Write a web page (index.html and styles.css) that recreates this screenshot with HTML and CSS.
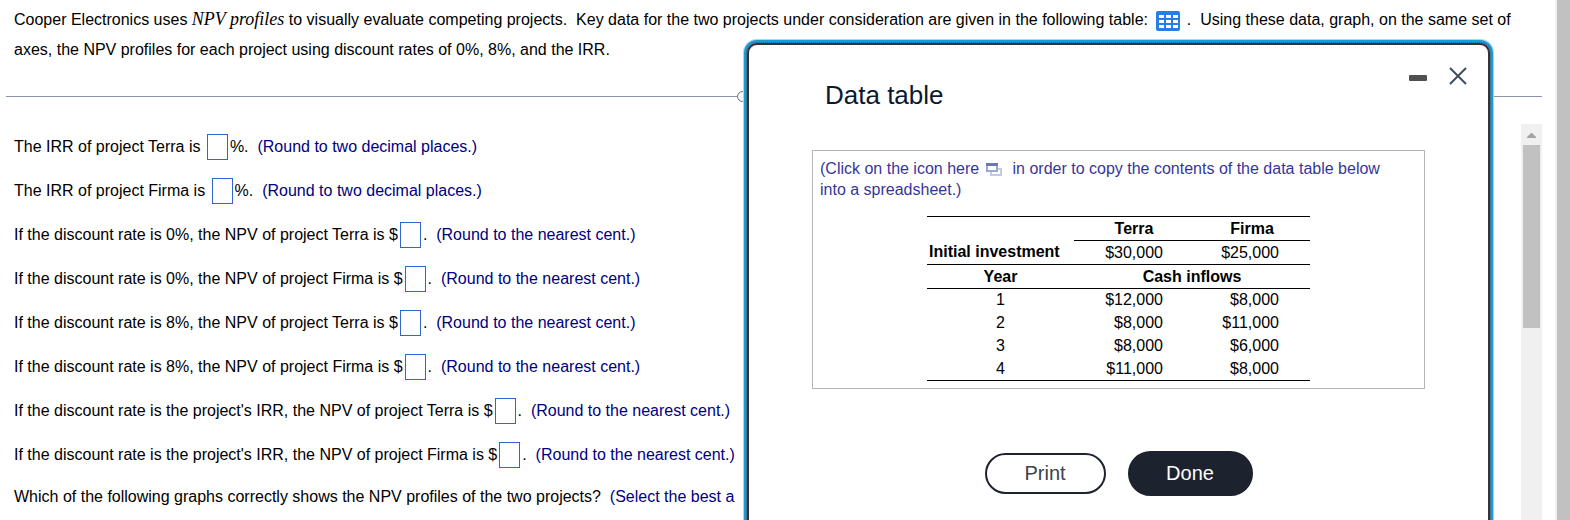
FILE: index.html
```html
<!DOCTYPE html>
<html lang="en">
<head>
    <meta charset="UTF-8">
    <meta name="viewport" content="width=device-width, initial-scale=1.0">
    <title>NPV profiles</title>
    <link rel="stylesheet" href="styles.css">
</head>
<body>
<div class="page">
    <main class="content">
        <p class="intro">Cooper Electronics uses <em class="term">NPV profiles</em> to visually evaluate competing projects.&nbsp; Key data for the two projects under consideration are given in the following table: <button class="tableIcon" type="button" aria-label="Data table"><svg width="24" height="20" viewBox="0 0 24 20"><rect width="24" height="20" rx="2" fill="#2b7de0"/><path fill="#fff" d="M3 4h5v3H3zM10 4h5v3h-5zM17 4h5v3h-5zM3 9h5v3H3zM10 9h5v3h-5zM17 9h5v3h-5zM3 14h5v3H3zM10 14h5v3h-5zM17 14h5v3h-5z"/></svg></button> .&nbsp; Using these data, graph, on the same set of axes, the NPV profiles for each project using discount rates of 0%, 8%, and the IRR.</p>
        <div class="divider"><span class="handle"></span></div>
        <div class="panel">
            <div class="questions">
                <p class="row"><label for="irrTerra">The IRR of project Terra is</label> <input class="blank" id="irrTerra" type="text">%.&nbsp; <span class="hint">(Round to two decimal places.)</span></p>
                <p class="row"><label for="irrFirma">The IRR of project Firma is</label> <input class="blank" id="irrFirma" type="text">%.&nbsp; <span class="hint">(Round to two decimal places.)</span></p>
                <p class="row"><label for="npv0Terra">If the discount rate is 0%, the NPV of project Terra is $</label><input class="blank" id="npv0Terra" type="text">.&nbsp; <span class="hint">(Round to the nearest cent.)</span></p>
                <p class="row"><label for="npv0Firma">If the discount rate is 0%, the NPV of project Firma is $</label><input class="blank" id="npv0Firma" type="text">.&nbsp; <span class="hint">(Round to the nearest cent.)</span></p>
                <p class="row"><label for="npv8Terra">If the discount rate is 8%, the NPV of project Terra is $</label><input class="blank" id="npv8Terra" type="text">.&nbsp; <span class="hint">(Round to the nearest cent.)</span></p>
                <p class="row"><label for="npv8Firma">If the discount rate is 8%, the NPV of project Firma is $</label><input class="blank" id="npv8Firma" type="text">.&nbsp; <span class="hint">(Round to the nearest cent.)</span></p>
                <p class="row"><label for="npvIrrTerra">If the discount rate is the project's IRR, the NPV of project Terra is $</label><input class="blank" id="npvIrrTerra" type="text">.&nbsp; <span class="hint">(Round to the nearest cent.)</span></p>
                <p class="row"><label for="npvIrrFirma">If the discount rate is the project's IRR, the NPV of project Firma is $</label><input class="blank" id="npvIrrFirma" type="text">.&nbsp; <span class="hint">(Round to the nearest cent.)</span></p>
                <p class="last">Which of the following graphs correctly shows the NPV profiles of the two projects?&nbsp; <span class="hint">(Select the best a</span></p>
            </div>
            <div class="scroll">
                <svg class="arrow" width="9" height="5" viewBox="0 0 9 5"><path d="M4 0h1l4 4v1H0V4z" fill="#a3a3a3"/></svg>
                <div class="thumb"></div>
            </div>
        </div>
    </main>
    <div class="pageScroll"></div>
</div>

<div class="modal" role="dialog" aria-labelledby="modalTitle">
    <div class="windowButtons">
        <button class="iconButton" type="button" aria-label="Minimize"><svg width="18" height="18" viewBox="0 0 18 18"><rect x="0" y="8" width="18" height="6" rx="1" fill="#505050"/></svg></button>
        <button class="iconButton" type="button" aria-label="Close"><svg width="18" height="18" viewBox="0 0 18 18"><path d="M1 1l16 16M17 1L1 17" stroke="#414d5c" stroke-width="2"/></svg></button>
    </div>
    <h1 class="title" id="modalTitle">Data table</h1>
    <div class="box">
        <p class="copy">(Click on the icon here <button class="copyIcon" type="button" aria-label="Copy"><svg width="16" height="13" viewBox="0 0 16 13"><path d="M5 6h10v6H5z" fill="#fff" stroke="#b4bfdf" stroke-width="2"/><path d="M1 1h10v7H1z" fill="#fff" stroke="#8492c8" stroke-width="2"/><path d="M0 0h12v3H0z" fill="#4257a5"/></svg></button>&nbsp; in order to copy the contents of the data table below into a spreadsheet.)</p>
        <table class="data">
            <colgroup><col class="colYear"><col class="colTerra"><col class="colFirma"></colgroup>
            <tr class="head top"><td></td><th class="under" scope="col">Terra</th><th class="under" scope="col">Firma</th></tr>
            <tr class="head line"><th class="first" scope="row">Initial investment</th><td>$30,000</td><td>$25,000</td></tr>
            <tr class="head line"><th scope="col">Year</th><th colspan="2" scope="colgroup">Cash inflows</th></tr>
            <tr><td class="year">1</td><td>$12,000</td><td>$8,000</td></tr>
            <tr><td class="year">2</td><td>$8,000</td><td>$11,000</td></tr>
            <tr><td class="year">3</td><td>$8,000</td><td>$6,000</td></tr>
            <tr class="line"><td class="year">4</td><td>$11,000</td><td>$8,000</td></tr>
        </table>
    </div>
    <div class="actions">
        <button class="print" type="button">Print</button>
        <button class="done" type="button">Done</button>
    </div>
</div>
</body>
</html>
```
FILE: styles.css
```css
*{
    box-sizing: border-box;
}
body{
    margin: 0;
    height: 100vh;
    overflow: hidden;
    background-color: white;
    color: black;
    font-family: "Liberation Sans", Arial, sans-serif;
    font-size: 16px;
}
p{
    margin: 0;
}
button{
    font-family: inherit;
    cursor: pointer;
}
.page{
    display: flex;
    height: 100vh;
}
.content{
    flex: 1;
    display: flex;
    flex-direction: column;
    min-width: 0;
    padding: 5px 13px 0 6px;
}
.pageScroll{
    width: 15px;
    background-color: #c1c1c1;
    border-left: 2px solid #f0f0f0;
}
.intro{
    padding: 0 8px;
    line-height: 30px;
}
.term{
    font-family: "Liberation Serif", "Times New Roman", serif;
    font-size: 18px;
    line-height: 20px;
}
.tableIcon, .copyIcon, .iconButton{
    padding: 0;
    border: 0;
    background: none;
}
.tableIcon{
    height: 20px;
    margin: 0 2px 0 4px;
    vertical-align: middle;
}
.tableIcon svg, .iconButton svg, .copyIcon svg{
    display: block;
}
/* line between the statement and the questions */
.divider{
    display: flex;
    align-items: center;
    justify-content: center;
    height: 1px;
    margin-top: 31px;
    background-color: #8b93a8;
}
.handle{
    flex: none;
    width: 74px;
    height: 11px;
    border: 1px solid #6b7280;
    border-radius: 6px;
    background-color: #f4f5f7;
}
.panel{
    flex: 1;
    display: flex;
    min-height: 0;
    margin-top: 27px;
}
.questions{
    flex: 1;
    padding: 1px 8px 0;
    overflow: hidden;
    white-space: nowrap;
}
.row{
    height: 44px;
    line-height: 44px;
}
.blank{
    width: 21px;
    height: 26px;
    margin: 0 2px 2px;
    padding: 0 2px;
    border: 1px solid #3366cc;
    vertical-align: middle;
    font-size: 16px;
}
.hint, .copy{
    color: #000080;
}
.last{
    line-height: 40px;
}
.scroll{
    width: 21px;
    padding: 9px 2px 0;
    background-color: #f0f0f0;
}
.arrow{
    display: block;
    margin: 0 auto 7px;
}
.thumb{
    height: 183px;
    background-color: #c1c1c1;
}
/* window */
.modal{
    position: absolute;
    top: 43px;
    right: 80px;
    bottom: -20px;
    width: 743px;
    padding: 22px 63px 20px;
    background-color: white;
    border: 2px solid #333;
    border-radius: 10px;
    outline: 1px dotted #555;
    box-shadow: 0 0 0 3px #1d99d6, 0 0 0 4px #a8d8f0;
}
.windowButtons{
    display: flex;
    justify-content: flex-end;
    gap: 22px;
    height: 18px;
    margin-right: -42px;
}
.title{
    margin: 0;
    padding-left: 13px;
    font-size: 26px;
    font-weight: normal;
    line-height: 20px;
    color: #0b1930;
}
.box{
    margin-top: 45px;
    padding: 7px;
    border: 1px solid #b5b5b5;
}
.copy{
    padding-right: 20px;
    line-height: 21px;
    opacity: 0.8;
}
.copyIcon{
    margin: 0 2px;
    vertical-align: middle;
}
.data{
    width: 383px;
    margin: 16px auto 0;
    border-collapse: collapse;
    table-layout: fixed;
}
.colYear{
    width: 147px;
}
.colTerra{
    width: 120px;
}
.data td, .data th{
    height: 23px;
    padding: 0 31px 0 0;
    line-height: 22px;
    text-align: right;
    white-space: nowrap;
}
.data .head td, .data .head th{
    height: 24px;
}
.data th, .data .year{
    padding: 0;
    text-align: center;
}
.data .first{
    padding-left: 2px;
    text-align: left;
}
.data .top{
    border-top: 1px solid black;
}
.data .line{
    border-bottom: 1px solid black;
}
.data .under{
    border-bottom: 1px solid black;
}
.actions{
    display: flex;
    align-items: center;
    justify-content: center;
    gap: 22px;
    margin-top: 62px;
}
.print, .done{
    border: 2px solid #1c222e;
    border-radius: 23px;
    font-size: 20px;
}
.print{
    width: 121px;
    height: 41px;
    background-color: white;
    color: #3c424e;
}
.done{
    width: 125px;
    height: 45px;
    background-color: #1c222e;
    color: white;
}
```
